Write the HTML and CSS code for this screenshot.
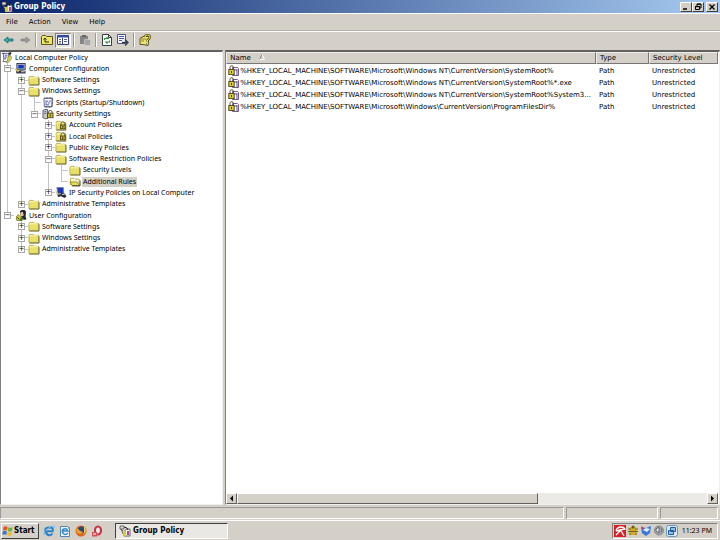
FILE: index.html
```html
<!DOCTYPE html>
<html lang="en">
<head>
<meta charset="utf-8">
<title>Group Policy</title>
<link rel="stylesheet" href="styles.css">
</head>
<body>
<svg class="defs" aria-hidden="true">
  <symbol id="folder" viewBox="0 0 12 12"><path d="M.5 2.500l1-1h3.500l1 1h5v8H.5z" fill="#e9e068" stroke="#b5ae58"/><path d="M1.500 4V3h8.500" fill="none" stroke="#fffbb5"/><path d="M1 11h10.500V3.500" fill="none" stroke="#69652d"/></symbol>
  <symbol id="folder-open" viewBox="0 0 12 12"><path d="M1 9.500v-7h4l1 1h4.500v6z" fill="#fbf8cf" stroke="#b5ae58"/><path d="M.5 6.500h7.500l3 4h-8z" fill="#e9df4c" stroke="#8f8a38"/><path d="M3 10.800h8.500V5" fill="none" stroke="#333"/></symbol>
  <symbol id="folder-lock" viewBox="0 0 12 12"><use href="#folder"/><path d="M6 6V4q0-2 2-2t2 2v2" fill="none" stroke="#55502a"/><rect x="5.500" y="5.500" width="5" height="4" fill="#c9b82e" stroke="#4b461d"/><path d="M8 6.500v2" stroke="#222"/></symbol>
  <symbol id="policy" viewBox="0 0 12 12"><path d="M2 1.500h6l-1 9H1.500l1-2z" fill="#fff" stroke="#667"/><path d="M.5 1.500h3M3.500 3.500h3M3 5.500h3M3 7.500h2" stroke="#39459c"/><path d="M7 1l3-1 1 1-2 3" fill="#333"/><path d="M7 5l3-1 1 3-3 4-3 .5 2-3z" fill="#dbd548" stroke="#77722b" stroke-width=".7"/></symbol>
  <symbol id="computer" viewBox="0 0 12 12"><rect x="1.500" y=".5" width="9" height="7" fill="#b8bdc9" stroke="#34384c"/><path d="M3 2h6v4H3z" fill="#1837b8"/><path d="M0 6l3 3 3-1 5 1v2.500H1z" fill="#34394e"/><path d="M0 6l2 1 2 3-3-1z" fill="#ddd038"/><path d="M6 9.500h4" stroke="#ddd"/></symbol>
  <symbol id="script" viewBox="0 0 12 12"><path d="M1.500 1.500h9l-.5 9H2z" fill="#f7f7ff" stroke="#5f6687"/><path d="M2 1h9M11 2v8l-1 1H2" fill="none" stroke="#263052" stroke-dasharray="1 .6"/><path d="M3 4.500h3M7 4.500h2M3 6.500h2M6 6.500h2M3 8.500h4" stroke="#3d50b2"/></symbol>
  <symbol id="security" viewBox="0 0 12 12"><path d="M.5 1.500l2-1h3v10h-3l-2-1z" fill="#c7c9cf" stroke="#55585f"/><path d="M2 3h2M2 5h2" stroke="#4b5678"/><path d="M6.500 5V3.500q0-2 2-2t2 2V5" fill="none" stroke="#55502a"/><rect x="5.500" y="4.500" width="6" height="5" fill="#cbbd2b" stroke="#4b461d"/><path d="M8.500 6v2" stroke="#222"/></symbol>
  <symbol id="ipsec" viewBox="0 0 12 12"><path d="M1.500.5h7l.5 6.500H2.500z" fill="#1c37bd" stroke="#7982a1"/><path d="M1 7h8l1 2H2z" fill="#8f94a3"/><path d="M6 6l4 1 2 3-2 2-4-2-3 1-1-2 4-1z" fill="#2b2d3c"/><path d="M0 4l2 1 1 3-2-1z" fill="#d7cf46"/><path d="M7 8h3" stroke="#eee"/></symbol>
  <symbol id="user" viewBox="0 0 12 12"><path d="M5 4q-1-3 2-4h3l1.500 2-.5 5 1 3-3 1-3-4z" fill="#222731"/><path d="M5 3l3-1 1 4-3 1z" fill="#e4cc9a"/><path d="M1 7l2-2 3 3 1 2-3 2-3-1z" fill="#d5c925" stroke="#625e20" stroke-width=".7"/><path d="M6 8l3 1-2 3H4z" fill="#49792b"/><path d="M2 8l2 2" stroke="#1c1c1c"/></symbol>
  <symbol id="rule" viewBox="0 0 12 12"><path d="M4.500 2.500h5l1 1v7h-6z" fill="#fff" stroke="#77598c"/><path d="M6 5h3M9 4v6" stroke="#4a4cae"/><path d="M2 5V2.500Q2 .7 3.700.7t1.800 1.800V5" fill="none" stroke="#55502a"/><rect x=".8" y="4.500" width="5.400" height="5" fill="#dccb35" stroke="#5c5218"/><path d="M3.500 6v2" stroke="#423c12"/></symbol>
  <symbol id="gp" viewBox="0 0 12 12"><path d="M1 1h4v3H1z" fill="#ddd" stroke="#333" stroke-width=".7"/><path d="M2 4l3 3 2-3h4v7H5z" fill="#f6f6ee" stroke="#444" stroke-width=".8"/><path d="M4 6h3v5H4z" fill="#dac929"/><path d="M8 6h2v4H8z" fill="#9e4b9c"/><path d="M5 2l3 1 1 2" fill="none" stroke="#222"/></symbol>
</svg>

<header class="titlebar">
  <svg class="icon"><use href="#gp"/></svg>
  <h1>Group Policy</h1>
  <div class="controls">
    <button type="button" aria-label="Minimize"><svg viewBox="0 0 10 8"><path d="M2 6h4" stroke="#000" stroke-width="1.500"/></svg></button>
    <button type="button" aria-label="Restore"><svg viewBox="0 0 10 8"><path d="M4 3V1h4v4H6M2.500 3.500h4v3h-4zM4 1.300h4M2 3.700h5" fill="none" stroke="#000"/></svg></button>
    <button type="button" aria-label="Close" class="close"><svg viewBox="0 0 10 8"><path d="M2.500 1.500l5 5M7.500 1.500l-5 5" stroke="#000" stroke-width="1.300"/></svg></button>
  </div>
</header>

<nav class="menubar">
  <button type="button">File</button><button type="button">Action</button><button type="button">View</button><button type="button">Help</button>
</nav>

<div class="toolbar">
  <button type="button" aria-label="Back"><svg viewBox="0 0 12 12"><path d="M1 6l4-3v2h5v2H5v2z" fill="#27b5b0" stroke="#176561" stroke-width=".8"/></svg></button>
  <button type="button" aria-label="Forward"><svg viewBox="0 0 12 12"><path d="M11 6L7 3v2H2v2h5v2z" fill="#999" stroke="#777" stroke-width=".6"/></svg></button>
  <span class="sep"></span>
  <button type="button" aria-label="Up one level"><svg viewBox="0 0 12 12"><path d="M.5 10.500v-8l1-1h3l1 1h6v8z" fill="#f0e65c" stroke="#5c5820"/><path d="M4 8V4M2.500 5.500L4 4l1.500 1.500M4 8h4" fill="none" stroke="#222"/></svg></button>
  <button type="button" aria-label="Show console tree" class="pressed"><svg viewBox="0 0 12 12"><path d="M.5 1.500h11v9H.5z" fill="#fff" stroke="#35427c"/><path d="M1 2.500h10" stroke="#3549a5" stroke-width="2"/><path d="M2 5.500h2M2 7.500h2M7 5.500h3M7 7.500h3M2 9h2" stroke="#58628f"/><path d="M5.500 4v6" stroke="#35427c"/></svg></button>
  <span class="sep"></span>
  <button type="button" aria-label="Paste" disabled><svg viewBox="0 0 12 12"><path d="M1 2h8v8H1z" fill="#858585"/><path d="M3 1h4v2H3z" fill="#666"/><path d="M5.500 5.500h5l1 1v5h-6z" fill="#a5a5a5" stroke="#d8d8d8" stroke-width=".6"/></svg></button>
  <span class="sep"></span>
  <button type="button" aria-label="Refresh"><svg viewBox="0 0 12 12"><path d="M1.500.5h6l3 3v8h-9z" fill="#fff" stroke="#333e48"/><path d="M7.500.5v3h3" fill="none" stroke="#333"/><path d="M3.500 6V4.500H7L5.500 3M8.500 6.500V8H5L6.500 9.500" fill="none" stroke="#2b953d" stroke-width="1.200"/></svg></button>
  <button type="button" aria-label="Export list"><svg viewBox="0 0 12 12"><path d="M.5.5h8v9h-8z" fill="#f7f7ff" stroke="#4c557a"/><path d="M2 2.500h5M2 4.500h5M2 6.500h3" stroke="#4656a6"/><path d="M5 8.500h5M8 5.500l3 3-3 3" fill="none" stroke="#333b4c" stroke-width="1.300"/></svg></button>
  <span class="sep"></span>
  <button type="button" aria-label="Help"><svg viewBox="0 0 12 12"><path d="M1 4.500l3-2h6l-1 9-5-1H1z" fill="#eee270" stroke="#5a5625"/><path d="M2 5h5M2 7h3" stroke="#8b8539"/><path d="M6 3q0-2 2.500-2T11 3q0 1.500-2.500 3v1.500M8.500 9v1.500" fill="none" stroke="#4c491c" stroke-width="2.200"/><path d="M6 3q0-2 2.500-2T11 3q0 1.500-2.500 3v1.500M8.500 9v1.500" fill="none" stroke="#fff14a"/></svg></button>
</div>

<main class="panes">
  <section class="tree" aria-label="Console tree">
    <div class="rows">
      <div class="row"><svg class="icon"><use href="#policy"/></svg><span class="label">Local Computer Policy</span></div>
      <div class="row"><i class="t"><button type="button" aria-label="Collapse">−</button></i><svg class="icon"><use href="#computer"/></svg><span class="label">Computer Configuration</span></div>
      <div class="row"><i class="v"></i><i class="t"><button type="button" aria-label="Expand">+</button></i><svg class="icon"><use href="#folder"/></svg><span class="label">Software Settings</span></div>
      <div class="row"><i class="v"></i><i class="t"><button type="button" aria-label="Collapse">−</button></i><svg class="icon"><use href="#folder"/></svg><span class="label">Windows Settings</span></div>
      <div class="row"><i class="v"></i><i class="v"></i><i class="t"></i><svg class="icon"><use href="#script"/></svg><span class="label">Scripts (Startup/Shutdown)</span></div>
      <div class="row"><i class="v"></i><i class="v"></i><i class="l"><button type="button" aria-label="Collapse">−</button></i><svg class="icon"><use href="#security"/></svg><span class="label">Security Settings</span></div>
      <div class="row"><i class="v"></i><i class="v"></i><i></i><i class="t"><button type="button" aria-label="Expand">+</button></i><svg class="icon"><use href="#folder-lock"/></svg><span class="label">Account Policies</span></div>
      <div class="row"><i class="v"></i><i class="v"></i><i></i><i class="t"><button type="button" aria-label="Expand">+</button></i><svg class="icon"><use href="#folder-lock"/></svg><span class="label">Local Policies</span></div>
      <div class="row"><i class="v"></i><i class="v"></i><i></i><i class="t"><button type="button" aria-label="Expand">+</button></i><svg class="icon"><use href="#folder"/></svg><span class="label">Public Key Policies</span></div>
      <div class="row"><i class="v"></i><i class="v"></i><i></i><i class="t"><button type="button" aria-label="Collapse">−</button></i><svg class="icon"><use href="#folder"/></svg><span class="label">Software Restriction Policies</span></div>
      <div class="row"><i class="v"></i><i class="v"></i><i></i><i class="v"></i><i class="t"></i><svg class="icon"><use href="#folder"/></svg><span class="label">Security Levels</span></div>
      <div class="row"><i class="v"></i><i class="v"></i><i></i><i class="v"></i><i class="l"></i><svg class="icon"><use href="#folder-open"/></svg><span class="label selected">Additional Rules</span></div>
      <div class="row"><i class="v"></i><i class="v"></i><i></i><i class="l"><button type="button" aria-label="Expand">+</button></i><svg class="icon"><use href="#ipsec"/></svg><span class="label">IP Security Policies on Local Computer</span></div>
      <div class="row"><i class="v"></i><i class="l"><button type="button" aria-label="Expand">+</button></i><svg class="icon"><use href="#folder"/></svg><span class="label">Administrative Templates</span></div>
      <div class="row"><i class="l"><button type="button" aria-label="Collapse">−</button></i><svg class="icon"><use href="#user"/></svg><span class="label">User Configuration</span></div>
      <div class="row"><i></i><i class="t"><button type="button" aria-label="Expand">+</button></i><svg class="icon"><use href="#folder"/></svg><span class="label">Software Settings</span></div>
      <div class="row"><i></i><i class="t"><button type="button" aria-label="Expand">+</button></i><svg class="icon"><use href="#folder"/></svg><span class="label">Windows Settings</span></div>
      <div class="row"><i></i><i class="l"><button type="button" aria-label="Expand">+</button></i><svg class="icon"><use href="#folder"/></svg><span class="label">Administrative Templates</span></div>
    </div>
  </section>

  <section class="list" aria-label="Additional Rules">
    <table>
      <colgroup><col><col class="col-type"><col class="col-level"></colgroup>
      <thead><tr><th>Name <svg class="sort" viewBox="0 0 6 6"><path d="M.5 5.500L3 .5" stroke="#808080"/><path d="M3 .5l2.500 5H.5" fill="none" stroke="#fff"/></svg></th><th>Type</th><th>Security Level</th></tr></thead>
      <tbody>
        <tr><td><svg class="icon"><use href="#rule"/></svg>%HKEY_LOCAL_MACHINE\SOFTWARE\Microsoft\Windows NT\CurrentVersion\SystemRoot%</td><td>Path</td><td>Unrestricted</td></tr>
        <tr><td><svg class="icon"><use href="#rule"/></svg>%HKEY_LOCAL_MACHINE\SOFTWARE\Microsoft\Windows NT\CurrentVersion\SystemRoot%*.exe</td><td>Path</td><td>Unrestricted</td></tr>
        <tr><td><svg class="icon"><use href="#rule"/></svg>%HKEY_LOCAL_MACHINE\SOFTWARE\Microsoft\Windows NT\CurrentVersion\SystemRoot%System3...</td><td>Path</td><td>Unrestricted</td></tr>
        <tr><td><svg class="icon"><use href="#rule"/></svg>%HKEY_LOCAL_MACHINE\SOFTWARE\Microsoft\Windows\CurrentVersion\ProgramFilesDir%</td><td>Path</td><td>Unrestricted</td></tr>
      </tbody>
    </table>
    <div class="scrollbar">
      <button type="button" aria-label="Scroll left"><svg viewBox="0 0 9 9"><path d="M6 1.500v6l-3-3z"/></svg></button>
      <div class="track"><div class="thumb"></div></div>
      <button type="button" aria-label="Scroll right"><svg viewBox="0 0 9 9"><path d="M3 1.500v6l3-3z"/></svg></button>
    </div>
  </section>
</main>

<div class="statusbar"><span class="wide"></span><span class="mid"></span><span class="small"></span></div>

<footer class="taskbar">
  <button type="button" class="start"><svg class="icon" viewBox="0 0 12 12"><path d="M1.500 2q2-1.500 4 0L5 5.500q-2-1-4 0z" fill="#e3542a"/><path d="M6.300 2.300q2 1 4.200 0L10 6q-2 1-4.200 0z" fill="#6db33a"/><path d="M.8 6.500q2-1.300 4 0L4.300 10q-2-1.300-4 0z" fill="#3c70cf"/><path d="M5.700 6.800q2 1.200 4.200 0l-.5 3.500q-2 1.200-4.200 0z" fill="#f0be2b"/></svg>Start</button>
  <div class="quick">
    <a href="#" aria-label="Internet Explorer"><svg viewBox="0 0 12 12"><path d="M9.500 8.500Q8 10.500 6 10.300T2.500 6.500 6 2.500t3.700 3.800H3" fill="none" stroke="#2a83c7" stroke-width="2"/><path d="M1 10Q0 7 5 3.500T11.500 1.500Q12 3 10 4" fill="none" stroke="#6bb9e8"/></svg></a>
    <a href="#" aria-label="Outlook Express"><svg viewBox="0 0 12 12"><path d="M1.500 1.500h7l2 2v8h-9z" fill="#edf6ff" stroke="#5683b5"/><path d="M9 8Q6 11 4 8t1-4 4 2H4" fill="none" stroke="#3288c7" stroke-width="1.400"/><path d="M8 5l3-3" stroke="#7aa8d0"/></svg></a>
    <a href="#" aria-label="Firefox"><svg viewBox="0 0 12 12"><circle cx="6" cy="6" r="5.500" fill="#dd641d"/><circle cx="6.500" cy="5" r="3.500" fill="#294782"/><path d="M1 3q3 1 4 3l3 1-2 2-4-1z" fill="#efa42b"/><path d="M9 1q4 5-1 9 1.500-3 1-5z" fill="#ffce47"/></svg></a>
    <a href="#" aria-label="Opera"><svg viewBox="0 0 12 12"><ellipse cx="7" cy="5.500" rx="3" ry="4" fill="#eee" stroke="#ca3440" stroke-width="2.200"/><path d="M1 7h5v4.500H1z" fill="#d65058"/><path d="M2 8h3v2H2z" fill="#eaa"/></svg></a>
  </div>
  <button type="button" class="task"><svg class="icon"><use href="#gp"/></svg>Group Policy</button>
  <div class="tray">
    <svg viewBox="0 0 12 12"><path d="M0 0h12v12H0z" fill="#d72028"/><path d="M2 6q1-4 5-4 3 0 4 2L2 6M6 4l4 7M7 5L2 10" fill="none" stroke="#fff" stroke-width="1.300"/></svg>
    <svg viewBox="0 0 12 12"><path d="M3 2h6l1 4-1 4H3L2 6z" fill="#d7ab20"/><path d="M1 4h3M8 4h3M1 6.500h10M2 9h2M8 9h2" stroke="#6b6322"/><circle cx="6" cy="2" r="1.500" fill="#655b1c"/></svg>
    <svg viewBox="0 0 12 12"><path d="M1 2l5 1 5-2-1 7-4 3-4-3z" fill="#3978dc"/><path d="M3 5l3-2 4 1-3 3z" fill="#e2efff"/><path d="M1 1l3 2-2 2z" fill="#c24b55"/></svg>
    <svg viewBox="0 0 12 12"><circle cx="6" cy="5.500" r="4.500" fill="#a5a7aa" stroke="#84878c"/><path d="M3 4l3-2v6L3 6zM8 3q2 2 0 4" fill="#eee" stroke="#5e6369"/></svg>
    <svg viewBox="0 0 12 12"><rect x=".5" y=".5" width="11" height="11" rx="2" fill="#d7e9fa" stroke="#6c96c0"/><path d="M4.500 2.500h5v4h-5zM2.500 5.500h5v4h-5z" fill="#91bde7" stroke="#225f9f"/></svg>
    <time>11:23 PM</time>
  </div>
</footer>
</body>
</html>
```

FILE: styles.css
```css
* { box-sizing: border-box; }

body {
  margin: 0;
  min-height: 100vh;
  display: flex;
  flex-direction: column;
  background: #d4d0c8;
  color: #000;
  font: 7px/11px "DejaVu Sans", sans-serif;
  white-space: nowrap;
}

button {
  margin: 0;
  padding: 0;
  border: 0;
  background: none;
  color: inherit;
  font: inherit;
}

svg { display: block; flex: none; }
.defs { position: absolute; width: 0; height: 0; }
.icon { width: 12px; height: 12px; }

.titlebar {
  display: flex;
  align-items: center;
  height: 13px;
  padding: 0 2px 0 1px;
  background: linear-gradient(90deg, #0a246a, #a6caf0);
  color: #fff;
}
.titlebar h1 { margin: 0 0 0 1px; font: bold 8px/12px "DejaVu Sans Condensed", sans-serif; flex: 1; }
.controls { display: flex; }
.controls button {
  width: 12px;
  height: 10px;
  background: #d4d0c8;
  border: 1px solid;
  border-color: #fff #404040 #404040 #fff;
}
.controls .close { margin-left: 2px; }

.menubar {
  display: flex;
  gap: 11px;
  height: 18px;
  padding: 0 6px;
  align-items: center;
  border-top: 1px solid #fff;
  border-bottom: 1px solid #b5b1a9;
}

.toolbar {
  display: flex;
  align-items: center;
  height: 17px;
  padding-left: 1px;
  border-top: 1px solid #fff;
}
.toolbar button { display: grid; place-items: center; width: 16px; height: 15px; }
.toolbar button svg { width: 12px; height: 12px; }
.toolbar .pressed { background: #e8e6e1; border: 1px solid; border-color: #808080 #fff #fff #808080; }
.sep { width: 2px; height: 14px; margin: 0 2px; border-left: 1px solid #999; border-right: 1px solid #fff; }

.panes { flex: 1; display: flex; gap: 2px; padding-top: 2px; }
.tree, .list {
  background: #fff;
  border: 1px solid #808080;
  border-top: 2px solid #606060;
  border-right-color: #eee;
  border-bottom-color: #eee;
}
.tree { flex: 0 0 31%; font-family: "Noto Sans", sans-serif; }
.rows { display: grid; grid-template-rows: repeat(18, 1fr); height: 203px; }
.row { display: flex; align-items: center; min-height: 0; }
.row .icon { margin-right: 1px; height: 11px; }
.label { padding: 0 1px; line-height: 10px; }
.selected { background: #d4d0c8; }

.row i {
  align-self: stretch;
  display: grid;
  align-items: center;
  width: 13px;
  padding-left: 3px;
  font-style: normal;
  background-repeat: no-repeat;
}
.row i:nth-of-type(odd) { width: 14px; }
.v { background-image: linear-gradient(#c4c4c4, #c4c4c4); background-size: 1px 100%; background-position: 6px 0; }
.t, .l { background-image: linear-gradient(#c4c4c4, #c4c4c4), linear-gradient(#c4c4c4, #c4c4c4); background-position: 6px 0, 6px 5px; }
.t { background-size: 1px 100%, 7px 1px; }
.l { background-size: 1px 50%, 7px 1px; }
.row button {
  width: 7px;
  height: 7px;
  border: 1px solid #a8a8a8;
  background: #fff;
  font: 7px/5px "DejaVu Sans", sans-serif;
  display: grid;
  place-content: center;
}

.list { flex: 1; min-width: 0; display: flex; flex-direction: column; justify-content: space-between; padding-right: 1px; }
table { width: 100%; table-layout: fixed; border-collapse: separate; border-spacing: 0; }
.col-type { width: 53px; }
.col-level { width: 69px; }
th {
  height: 12px;
  padding: 0 3px;
  background: #d4d0c8;
  border: 1px solid;
  border-color: #eee #777 #777 #eee;
  font-weight: normal;
  line-height: 10px;
  text-align: left;
}
.sort { display: inline-block; width: 6px; height: 6px; margin-left: 6px; }
td { height: 12px; padding: 0 3px; line-height: 12px; overflow: hidden; }
tbody::before { content: ""; display: block; height: 1px; }
td:first-child { padding: 0 2px; }
td .icon { float: left; }

.scrollbar { display: flex; height: 11px; }
.scrollbar button, .thumb { background: #d4d0c8; border: 1px solid; border-color: #fff #606060 #606060 #fff; }
.scrollbar button { width: 11px; }
.track { flex: 1; background: #eceae6; }
.thumb { width: 64%; height: 11px; }

.statusbar { display: flex; gap: 2px; padding: 2px 2px 1px 0; }
.statusbar span { height: 12px; border: 1px solid; border-color: #999 #fff #fff #999; }
.wide { flex: 1; }
.mid { width: 92px; }
.small { width: 58px; }

.taskbar {
  display: flex;
  align-items: center;
  height: 20px;
  padding: 0 2px 0 1px;
  border-top: 1px solid #fff;
}
.start, .task { display: flex; align-items: center; height: 16px; border: 1px solid; font: bold 8px/12px "DejaVu Sans Condensed", sans-serif; }
.start { width: 38px; border-color: #fff #404040 #404040 #fff; }
.task { width: 113px; padding-left: 3px; gap: 2px; background: #eae8e4; border-color: #404040 #fff #fff #404040; }
.quick { display: flex; gap: 4px; margin: 0 12px 0 4px; }
.quick svg { width: 12px; height: 12px; }
.tray {
  display: flex;
  align-items: center;
  gap: 1px;
  height: 16px;
  margin-left: auto;
  padding: 0 5px 0 1px;
  border: 1px solid;
  border-color: #808080 #fff #fff #808080;
}
.tray svg { width: 12px; height: 12px; }
.tray time { margin-left: 3px; font-family: "Noto Sans", sans-serif; }
```
